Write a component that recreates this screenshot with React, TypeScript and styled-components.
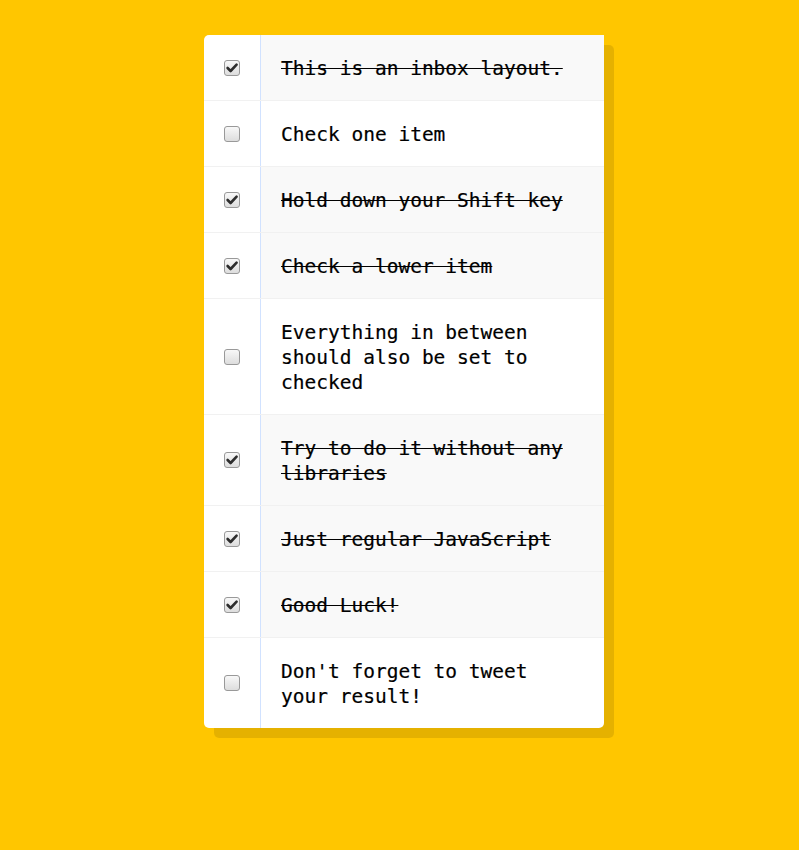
import React, { useState } from "react";
import styled, { createGlobalStyle } from "styled-components";

const Global = createGlobalStyle`
  html { background: #ffc600; }
  body { margin: 0; padding-left: 9px; background: #ffc600; font-family: "DejaVu Sans Mono", monospace; }
`;

const Inbox = styled.div`
  max-width: 400px;
  margin: 35px auto;
  background: #ffffff;
  border-radius: 5px;
  box-shadow: 10px 10px 0 rgba(0, 0, 0, 0.1);
`;

const Item = styled.div`
  display: flex;
  align-items: center;
  border-bottom: 1px solid #f1f1f1;
  &:last-child { border-bottom: 0; }
`;

const BoxWrap = styled.label`
  position: relative;
  display: block;
  flex: none;
  margin: 20px 20px 20px 20px;
  width: 16px;
  height: 16px;
`;

const Check = styled.input`
  appearance: none;
  -webkit-appearance: none;
  display: block;
  margin: 0;
  width: 16px;
  height: 16px;
  box-sizing: border-box;
  border: 1px solid #999999;
  border-radius: 3px;
  background: linear-gradient(#f8f8f8, #dddddd);
  cursor: pointer;
`;

const Tick = styled.svg`
  position: absolute;
  left: 0;
  top: 0;
  width: 16px;
  height: 16px;
  pointer-events: none;
`;

const Label = styled.p<{ $done: boolean }>`
  margin: 0;
  padding: 21px 20px 19px;
  flex: 1;
  align-self: stretch;
  display: flex;
  align-items: center;
  font-family: "DejaVu Sans Mono", monospace;
  font-size: 19.5px;
  line-height: 25px;
  color: #000;
  -webkit-text-stroke: 0.2px #000;
  border-left: 1px solid #d1e2ff;
  background: ${(p) => (p.$done ? "#f9f9f9" : "transparent")};
  text-decoration: ${(p) => (p.$done ? "line-through" : "none")};
`;

const initial = [
  { text: "This is an inbox layout.", done: true },
  { text: "Check one item", done: false },
  { text: "Hold down your Shift key", done: true },
  { text: "Check a lower item", done: true },
  { text: "Everything in between should also be set to checked", done: false },
  { text: "Try to do it without any libraries", done: true },
  { text: "Just regular JavaScript", done: true },
  { text: "Good Luck!", done: true },
  { text: "Don't forget to tweet your result!", done: false },
];

export default function App() {
  const [items, setItems] = useState(initial);
  return (
    <>
      <Global />
      <Inbox>
        {items.map((it, i) => (
          <Item key={i}>
            <BoxWrap>
              <Check
                type="checkbox"
                checked={it.done}
                onChange={() =>
                  setItems((prev) => prev.map((x, j) => (j === i ? { ...x, done: !x.done } : x)))
                }
              />
              {it.done && (
                <Tick viewBox="0 0 16 16">
                  <path d="M3.6 8 L6.6 11 L12.6 4.6" fill="none" stroke="#2d2d2d" strokeWidth="2.6" strokeLinecap="round" strokeLinejoin="round" />
                </Tick>
              )}
            </BoxWrap>
            <Label $done={it.done}><span>{it.text}</span></Label>
          </Item>
        ))}
      </Inbox>
    </>
  );
}
